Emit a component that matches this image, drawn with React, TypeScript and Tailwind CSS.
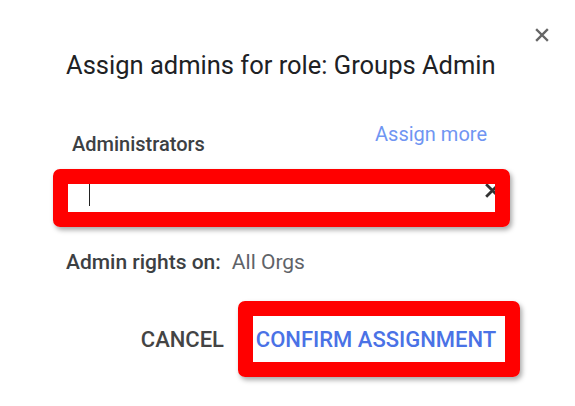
import { useState } from "react";

const CloseIcon = ({ size = 14, stroke = 2.4 }: { size?: number; stroke?: number }) => (
 <svg width={size} height={size} viewBox="0 0 14 14" fill="none" stroke="currentColor" strokeWidth={stroke} strokeLinecap="square">
  <path d="M2 2l10 10M12 2L2 12" />
 </svg>
);

const App = () => {
 const [admins, setAdmins] = useState("");

 return (
  <main className="relative w-[575px] h-[406px] bg-white overflow-hidden font-['Roboto',sans-serif]">
   {/* dialog close */}
   <button className="absolute left-[535px] top-[28px] text-[#666]">
    <CloseIcon />
   </button>

   <div className="pl-[66px] pt-[50px] flex flex-col">
    <h1 className="text-[25.5px] leading-[30px] text-[#202124] font-normal">
     Assign admins for role: Groups Admin
    </h1>

    <div className="mt-[42px] w-[421px] flex justify-between items-start">
     <span className="mt-[10px] pl-[6px] text-[20px] leading-[24px] font-medium text-[#3c4043]">
      Administrators
     </span>
     <a href="#" className="text-[20px] leading-[24px] text-[#7095f2]">
      Assign more
     </a>
    </div>

    {/* highlighted input */}
    <div className="mt-[13px] -ml-[13px] w-[457px] h-[58px] border-[15px] border-[#ff0000] rounded-[7px] shadow-[2px_3px_5px_rgba(0,0,0,0.35)]">
     <div className="relative h-full bg-white overflow-hidden flex items-start">
      <div className="ml-[21px] w-px h-[22px] bg-[#222]" />
      <input
       value={admins}
       onChange={(e) => setAdmins(e.target.value)}
       className="absolute inset-0 opacity-0"
      />
      <span className="absolute right-[-5px] top-[-1px] text-[#333]">
       <CloseIcon size={15} stroke={2.6} />
      </span>
     </div>
    </div>

    <p className="mt-[23px] text-[21px] leading-[24px]">
     <span className="font-medium text-[#3c4043]">Admin rights on:</span>
     <span className="ml-[11px] text-[#5f6368]">All Orgs</span>
    </p>
   </div>

   <div className="mt-[27px] pr-[55px] flex justify-end items-center gap-[14px]">
    <button className="text-[22px] font-medium text-[#444]">CANCEL</button>
    <div className="w-[282px] h-[76px] border-[15px] border-[#ff0000] rounded-[7px] shadow-[2px_3px_5px_rgba(0,0,0,0.35)]">
     <button className="w-full h-full bg-white flex items-center justify-center pr-[6px] text-[22px] font-medium text-[#4a72e6]">
      CONFIRM ASSIGNMENT
     </button>
    </div>
   </div>
  </main>
 );
};

export default App;
